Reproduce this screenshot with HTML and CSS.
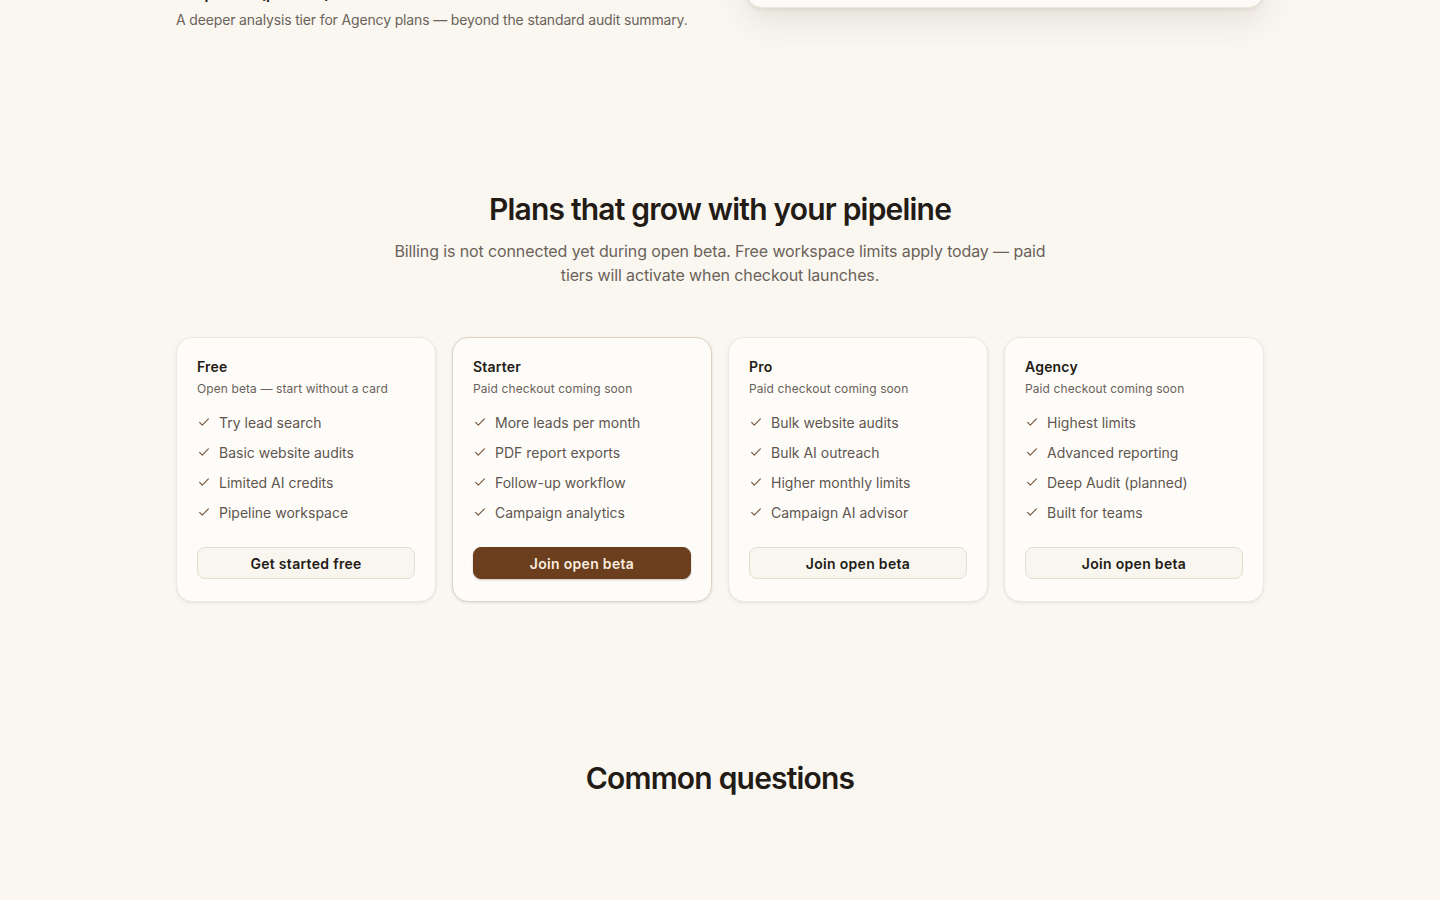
FILE: index.html
```html
<!DOCTYPE html>
<html lang="en">
<head>
<meta charset="utf-8">
<title>Pricing</title>
<link rel="stylesheet" href="styles.css">
</head>
<body>
<main class="page">
  <section class="feature-tail">
    <div class="feature-copy">
      <h3 class="feature-title">Deep Audit (planned)</h3>
      <p class="feature-text">A deeper analysis tier for Agency plans — beyond the standard audit summary.</p>
    </div>
    <div class="feature-visual">
      <div class="visual-card"></div>
    </div>
  </section>

  <section class="pricing">
    <header class="section-head">
      <h2 class="section-title">Plans that grow with your pipeline</h2>
      <p class="section-sub">Billing is not connected yet during open beta. Free workspace limits apply today — paid tiers will activate when checkout launches.</p>
    </header>

    <div class="plans">
      <article class="plan">
        <h3 class="plan-name">Free</h3>
        <p class="plan-note">Open beta — start without a card</p>
        <ul class="plan-list">
          <li><svg class="check" viewBox="0 0 16 16"><path d="M3 8.5l3 3 7-7"/></svg>Try lead search</li>
          <li><svg class="check" viewBox="0 0 16 16"><path d="M3 8.5l3 3 7-7"/></svg>Basic website audits</li>
          <li><svg class="check" viewBox="0 0 16 16"><path d="M3 8.5l3 3 7-7"/></svg>Limited AI credits</li>
          <li><svg class="check" viewBox="0 0 16 16"><path d="M3 8.5l3 3 7-7"/></svg>Pipeline workspace</li>
        </ul>
        <a class="btn btn-light" href="#">Get started free</a>
      </article>

      <article class="plan plan-featured">
        <h3 class="plan-name">Starter</h3>
        <p class="plan-note">Paid checkout coming soon</p>
        <ul class="plan-list">
          <li><svg class="check" viewBox="0 0 16 16"><path d="M3 8.5l3 3 7-7"/></svg>More leads per month</li>
          <li><svg class="check" viewBox="0 0 16 16"><path d="M3 8.5l3 3 7-7"/></svg>PDF report exports</li>
          <li><svg class="check" viewBox="0 0 16 16"><path d="M3 8.5l3 3 7-7"/></svg>Follow-up workflow</li>
          <li><svg class="check" viewBox="0 0 16 16"><path d="M3 8.5l3 3 7-7"/></svg>Campaign analytics</li>
        </ul>
        <a class="btn btn-dark" href="#">Join open beta</a>
      </article>

      <article class="plan">
        <h3 class="plan-name">Pro</h3>
        <p class="plan-note">Paid checkout coming soon</p>
        <ul class="plan-list">
          <li><svg class="check" viewBox="0 0 16 16"><path d="M3 8.5l3 3 7-7"/></svg>Bulk website audits</li>
          <li><svg class="check" viewBox="0 0 16 16"><path d="M3 8.5l3 3 7-7"/></svg>Bulk AI outreach</li>
          <li><svg class="check" viewBox="0 0 16 16"><path d="M3 8.5l3 3 7-7"/></svg>Higher monthly limits</li>
          <li><svg class="check" viewBox="0 0 16 16"><path d="M3 8.5l3 3 7-7"/></svg>Campaign AI advisor</li>
        </ul>
        <a class="btn btn-light" href="#">Join open beta</a>
      </article>

      <article class="plan">
        <h3 class="plan-name">Agency</h3>
        <p class="plan-note">Paid checkout coming soon</p>
        <ul class="plan-list">
          <li><svg class="check" viewBox="0 0 16 16"><path d="M3 8.5l3 3 7-7"/></svg>Highest limits</li>
          <li><svg class="check" viewBox="0 0 16 16"><path d="M3 8.5l3 3 7-7"/></svg>Advanced reporting</li>
          <li><svg class="check" viewBox="0 0 16 16"><path d="M3 8.5l3 3 7-7"/></svg>Deep Audit (planned)</li>
          <li><svg class="check" viewBox="0 0 16 16"><path d="M3 8.5l3 3 7-7"/></svg>Built for teams</li>
        </ul>
        <a class="btn btn-light" href="#">Join open beta</a>
      </article>
    </div>
  </section>

  <section class="faq">
    <h2 class="section-title">Common questions</h2>
  </section>
</main>
</body>
</html>
```

FILE: styles.css
```css
* { box-sizing: border-box; }

html, body {
  margin: 0;
  padding: 0;
  background: #faf7f1;
  color: #231b15;
  font-family: Inter, "Liberation Sans", Arial, sans-serif;
  height: 900px;
  overflow: hidden;
}

.page {
  width: 1088px;
  margin: 0 auto;
}

/* tail of previous section */
.feature-tail {
  display: grid;
  grid-template-columns: 1fr 518px;
  gap: 30px;
  margin-top: -16px;
  align-items: start;
}

.feature-title {
  margin: 0 0 6px;
  font-size: 15px;
  line-height: 20px;
  font-weight: 600;
  color: #231b15;
}

.feature-text {
  margin: 0;
  font-size: 14px;
  line-height: 20px;
  color: #6b625a;
  white-space: nowrap;
  letter-spacing: -0.15px;
}

.visual-card {
  height: 60px;
  margin-top: -36px;
  background: #fdfbf7;
  border: 1px solid #ece7df;
  border-radius: 16px;
  box-shadow: 0 14px 32px rgba(60, 45, 30, 0.10), 0 2px 4px rgba(60, 45, 30, 0.08);
}

/* pricing */
.pricing {
  padding-top: 159px;
}

.section-head {
  text-align: center;
}

.section-title {
  margin: 0;
  font-size: 30px;
  line-height: 40px;
  font-weight: 600;
  letter-spacing: -0.8px;
  color: #231b15;
  text-align: center;
}

.section-sub {
  width: 672px;
  margin: 10px auto 0;
  font-size: 16px;
  line-height: 24px;
  color: #6b625a;
  letter-spacing: -0.12px;
}

.plans {
  display: grid;
  grid-template-columns: repeat(4, 1fr);
  gap: 16px;
  margin-top: 50px;
}

.plan {
  display: flex;
  flex-direction: column;
  background: #fefcf9;
  border: 1px solid #ece7df;
  border-radius: 16px;
  padding: 19px 20px 22px;
  box-shadow: 0 1px 3px rgba(60, 45, 30, 0.10);
}

.plan-featured {
  border-color: #ddd2c6;
  box-shadow: 0 1px 3px rgba(60, 45, 30, 0.12);
}

.plan-name {
  margin: 0;
  font-size: 14px;
  line-height: 20px;
  font-weight: 600;
  color: #231b15;
  letter-spacing: 0.2px;
}

.plan-note {
  margin: 4px 0 0;
  font-size: 12px;
  line-height: 16px;
  color: #6b625a;
  letter-spacing: 0.1px;
}

.plan-list {
  list-style: none;
  margin: 16px 0 0;
  padding: 0;
  display: flex;
  flex-direction: column;
  gap: 10px;
}

.plan-list li {
  display: flex;
  align-items: center;
  gap: 8px;
  font-size: 14px;
  line-height: 20px;
  color: #5f564f;
}

.check {
  width: 14px;
  height: 14px;
  flex: none;
  fill: none;
  stroke: #7a5a40;
  stroke-width: 1.4;
  stroke-linecap: round;
  stroke-linejoin: round;
  margin-top: -2px;
}

.btn {
  display: flex;
  align-items: center;
  justify-content: center;
  height: 32px;
  margin-top: 24px;
  border-radius: 8px;
  font-size: 14px;
  font-weight: 600;
  text-decoration: none;
  letter-spacing: 0.3px;
}

.btn-light {
  background: #f9f6f0;
  border: 1px solid #e4ddd3;
  color: #231b15;
}

.btn-dark {
  background: #6b3f1d;
  border: 1px solid #6b3f1d;
  color: #f8ecdf;
  box-shadow: 0 1px 2px rgba(60, 35, 15, 0.25);
}

.faq {
  padding-top: 156px;
}
```
